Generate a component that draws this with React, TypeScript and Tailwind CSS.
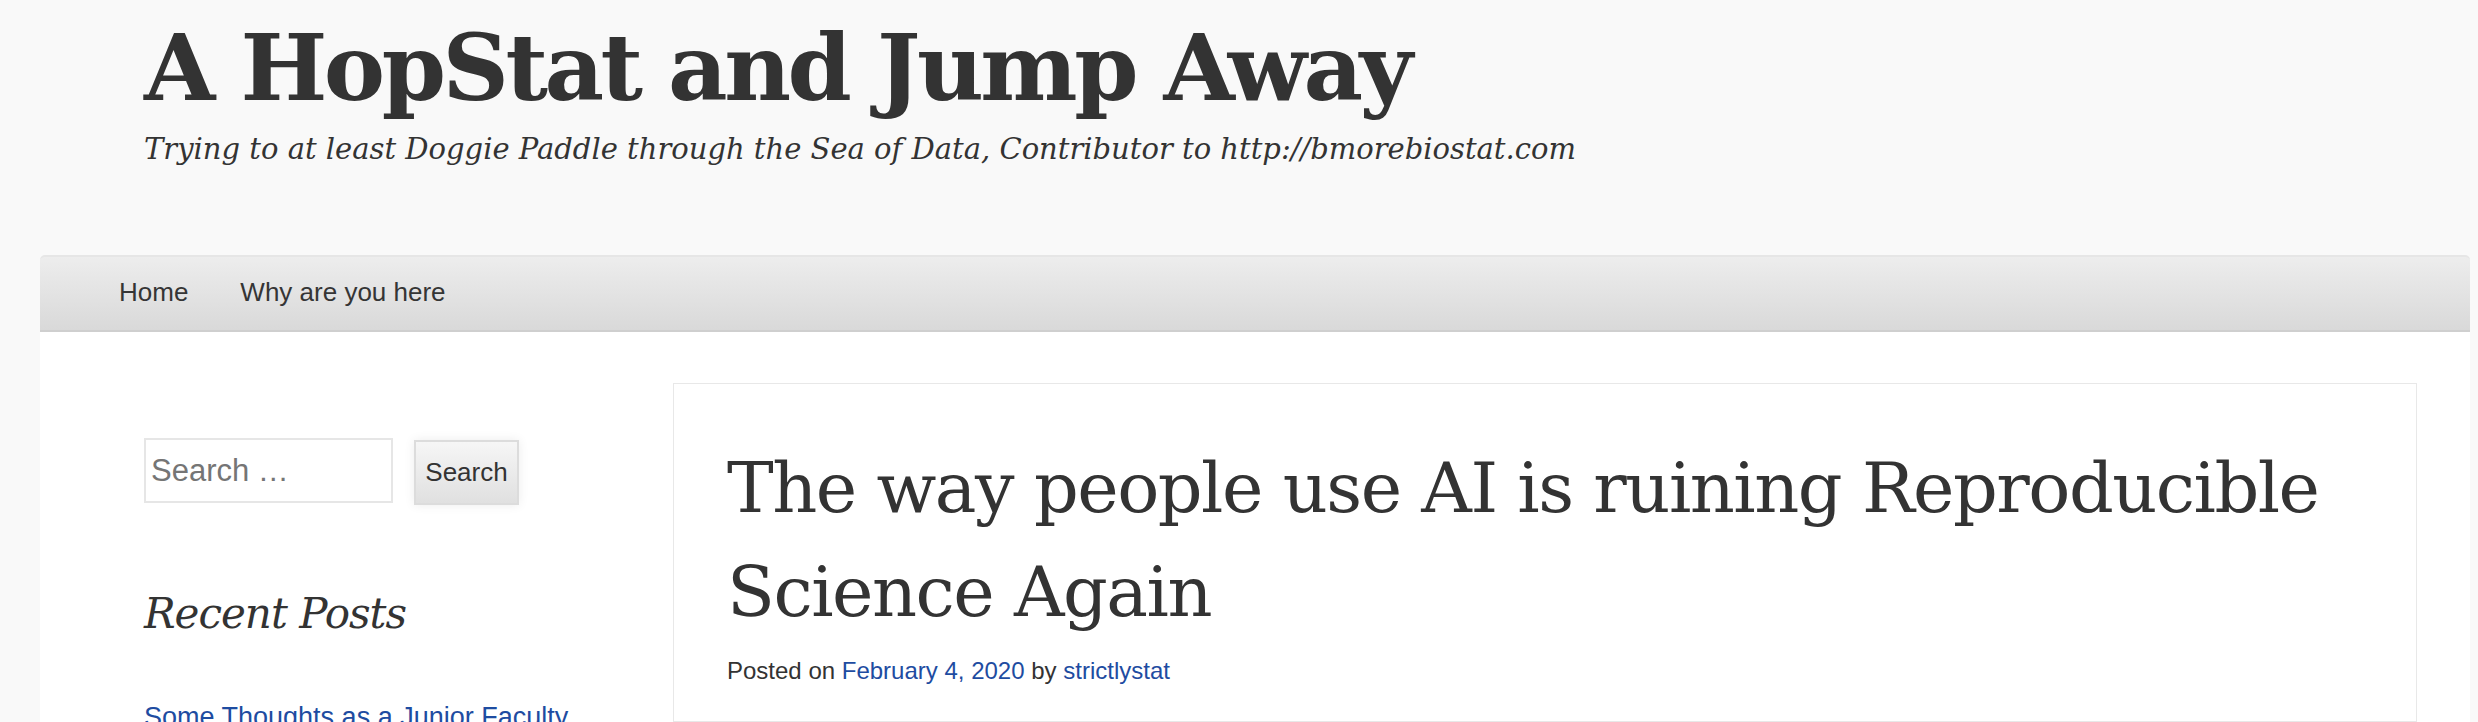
const serif = { fontFamily: '"DejaVu Serif", "Liberation Serif", serif' };

export default function App() {
  return (
    <div className="min-h-screen w-full bg-[#f9f9f9] text-[#333]">
      {/* site header */}
      <header className="pl-[144px] pt-[22px] h-[255px]">
        <h1
          className="text-[92px] leading-none font-bold tracking-[-3.5px] whitespace-nowrap"
          style={serif}
        >
          A HopStat and Jump Away
        </h1>
        <p
          className="mt-[15px] italic text-[29px] leading-[40px] whitespace-nowrap"
          style={serif}
        >
          Trying to at least Doggie Paddle through the Sea of Data, Contributor to http://bmorebiostat.com
        </p>
      </header>

      <div className="ml-[40px] mr-[8px]">
        {/* nav bar */}
        <nav className="h-[77px] rounded-t-[5px] border-t-2 border-[#e6e6e6] border-b-2 border-b-[#cfcfcf] bg-gradient-to-b from-[#ededed] to-[#d9d9d9] flex items-center pl-[79px] gap-[52px] font-[Liberation_Sans,Arial,sans-serif] text-[26px] text-[#353535] pb-[2px]">
          <a href="#">Home</a>
          <a href="#">Why are you here</a>
        </nav>

        {/* body */}
        <div className="bg-white flex h-[390px] overflow-hidden">
          <aside className="w-[633px] shrink-0 pl-[104px] pt-[106px]">
            <form className="flex items-start" onSubmit={(e) => e.preventDefault()}>
              <input
                type="search"
                placeholder="Search …"
                className="w-[249px] h-[65px] border-2 border-[#e6e6e6] bg-white px-[5px] font-[Liberation_Sans,Arial,sans-serif] text-[31px] text-[#333] placeholder:text-[#757575] outline-none"
              />
              <button
                type="submit"
                className="ml-[21px] mt-[2px] w-[105px] h-[65px] border-2 border-[#dcdcdc] bg-gradient-to-b from-[#f6f6f6] to-[#e0e0e0] shadow-[0_0_10px_rgba(0,0,0,0.08)] font-[Liberation_Sans,Arial,sans-serif] text-[26px] text-[#333]"
              >
                Search
              </button>
            </form>

            <h3
              className="mt-[88px] text-[42px] leading-none italic tracking-[-1px] whitespace-nowrap"
              style={serif}
            >
              Recent Posts
            </h3>
            <ul className="mt-[64px]">
              <li className="font-[Liberation_Sans,Arial,sans-serif] text-[27px] leading-[1.4] text-[#1e4ca1] whitespace-nowrap">
                <a href="#">Some Thoughts as a Junior Faculty</a>
              </li>
            </ul>
          </aside>

          <main className="flex-1 pt-[51px] pr-[53px]">
            <article className="border border-[#e8e8e8] h-full pl-[53px] pt-[52px]">
              <h2
                className="text-[70px] leading-[104px] font-normal tracking-[-1.5px] whitespace-nowrap"
                style={serif}
              >
                The way people use AI is ruining Reproducible
                <br />
                Science Again
              </h2>
              <p className="mt-[9px] font-[Liberation_Sans,Arial,sans-serif] text-[24px] leading-[1.5] text-[#333]">
                Posted on <a href="#" className="text-[#1e4ca1]">February 4, 2020</a> by{" "}
                <a href="#" className="text-[#1e4ca1]">strictlystat</a>
              </p>
            </article>
          </main>
        </div>
      </div>
    </div>
  );
}
